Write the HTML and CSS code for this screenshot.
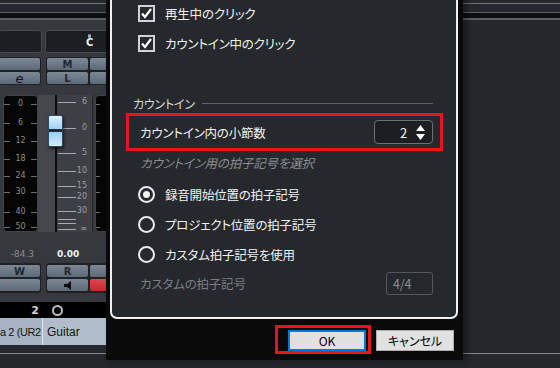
FILE: index.html
```html
<!DOCTYPE html>
<html lang="ja">
<head>
<meta charset="UTF-8">
<meta name="viewport" content="width=device-width, initial-scale=1.0">
<title>メトロノーム設定</title>
<link rel="stylesheet" href="styles.css">
</head>
<body>

<div class="mixer">
    <div class="topbar"></div>
    <div class="topbar-dark"></div>
    <div class="strips">
        <div class="row displays">
            <div class="display display-left"></div>
            <div class="display display-pan"><span class="pan-dot"></span><span class="pan-c">C</span></div>
        </div>

        <div class="row buttons">
            <div class="btn-group narrow">
                <div class="btn"></div>
                <div class="btn btn-e">e</div>
            </div>
            <div class="btn-group wide">
                <div class="btn-col">
                    <div class="btn">M</div>
                    <div class="btn">L</div>
                </div>
                <div class="btn-col side">
                    <div class="btn"></div>
                    <div class="btn"></div>
                </div>
            </div>
        </div>

        <div class="row faders">
            <div class="meter meter-left">
                <div class="tick" style="height:19px"><i></i><span>0</span><i></i></div>
                <div class="tick" style="height:18px"><i></i><span>6</span><i></i></div>
                <div class="tick" style="height:18px"><i></i><span>12</span><i></i></div>
                <div class="tick" style="height:17px"><i></i><span>18</span><i></i></div>
                <div class="tick" style="height:16px"><i></i><span>24</span><i></i></div>
                <div class="tick" style="height:20px"><i></i><span>30</span><i></i></div>
                <div class="tick" style="height:15px"><i></i><span>40</span><i></i></div>
                <div class="tick" style="height:10px"><i></i><span>50</span><i></i></div>
            </div>
            <div class="fader"></div>
            <div class="scale">
                <div class="tick" style="height:26px"><i></i><span>6</span></div>
                <div class="tick" style="height:25px"><i></i><span>0</span></div>
                <div class="tick" style="height:18px"><i></i><span>5</span></div>
                <div class="tick" style="height:15px"><i></i><span>10</span></div>
                <div class="tick" style="height:11px"><i></i><span>15</span></div>
                <div class="tick" style="height:14px"><i></i><span>20</span></div>
                <div class="tick" style="height:8px"><i></i><span>30</span></div>
                <div class="tick" style="height:4px"><i></i><span></span></div>
                <div class="tick" style="height:6px"><i></i><span></span></div>
                <div class="tick" style="height:8px"><i></i><span>∞</span></div>
            </div>
            <div class="meter meter-right">
                <div class="tick" style="height:19px"><i></i></div>
                <div class="tick" style="height:18px"><i></i></div>
                <div class="tick" style="height:18px"><i></i></div>
                <div class="tick" style="height:17px"><i></i></div>
                <div class="tick" style="height:16px"><i></i></div>
                <div class="tick" style="height:20px"><i></i></div>
                <div class="tick" style="height:15px"><i></i></div>
                <div class="tick" style="height:10px"><i></i></div>
            </div>
            <div class="fader-cap"></div>
        </div>

        <div class="row values">
            <span class="value-left">-84.3</span>
            <span class="value-right">0.00</span>
        </div>

        <div class="row buttons buttons-low">
            <div class="btn-group narrow">
                <div class="btn">W</div>
                <div class="btn"></div>
            </div>
            <div class="btn-group wide">
                <div class="btn-col">
                    <div class="btn">R</div>
                    <div class="btn">
                        <svg width="8" height="9" viewBox="0 0 8 9"><path d="M0 3h3l4-3v9l-4-3h-3z" fill="#0d0d0d"/></svg>
                    </div>
                </div>
                <div class="btn-col side">
                    <div class="btn"></div>
                    <div class="btn btn-red"></div>
                </div>
            </div>
        </div>

        <div class="row numbers">
            <span class="num">2</span>
            <span class="ring"></span>
        </div>

        <div class="row names">
            <div class="name name-left">a 2 (UR2</div>
            <div class="name name-right">Guitar</div>
        </div>
    </div>
    <div class="bottomline"></div>
</div>

<div class="dialog">
    <div class="panel">
        <label class="check-row">
            <span class="checkbox"><svg width="13" height="13" viewBox="0 0 13 13"><path d="M2 6.5l3 3.5 6-8" fill="none" stroke="#fff" stroke-width="2.2"/></svg></span>
            再生中のクリック
        </label>
        <label class="check-row">
            <span class="checkbox"><svg width="13" height="13" viewBox="0 0 13 13"><path d="M2 6.5l3 3.5 6-8" fill="none" stroke="#fff" stroke-width="2.2"/></svg></span>
            カウントイン中のクリック
        </label>

        <div class="section-title"><span>カウントイン</span><div class="section-line"></div></div>

        <div class="bars-row">
            <span>カウントイン内の小節数</span>
            <div class="spin">
                <span>2</span>
                <svg width="9" height="15" viewBox="0 0 9 15"><path d="M4.5 0L9 6H0z M0 9h9L4.5 15z" fill="#fff"/></svg>
            </div>
        </div>

        <div class="hint">カウントイン用の拍子記号を選択</div>

        <label class="radio-row"><span class="radio on"></span>録音開始位置の拍子記号</label>
        <label class="radio-row"><span class="radio"></span>プロジェクト位置の拍子記号</label>
        <label class="radio-row"><span class="radio"></span>カスタム拍子記号を使用</label>

        <div class="custom-row">
            <span>カスタムの拍子記号</span>
            <div class="sig-box">4/4</div>
        </div>
    </div>
    <div class="dialog-buttons">
        <button class="dlg-btn ok">OK</button>
        <button class="dlg-btn">キャンセル</button>
    </div>
</div>

</body>
</html>
```

FILE: styles.css
```css
body {
    margin: 0;
    width: 560px;
    height: 368px;
    overflow: hidden;
    position: relative;
    background-color: #24272b;
    font-family: "Noto Sans CJK JP", "Noto Sans", sans-serif;
}

/* ミキサー（背景） */
.mixer {
    height: 368px;
    display: flex;
    flex-direction: column;
}
.topbar {
    height: 12px;
    border-bottom: 1px solid #5c5f63;
    background: linear-gradient(#25282c 3px, #6e7175 3px, #6e7175 4px, #25282c 4px);
}
.topbar-dark {
    height: 5px;
    background-color: #0c0d0e;
    border-bottom: 2px solid #5c5f63;
}
.strips {
    width: 106px;
    padding-top: 10px;
    background-color: #35383c;
    overflow: hidden;
    font-family: "DejaVu Sans", sans-serif;
}
.row {
    display: flex;
}
.row > * {
    flex: none;
}
.displays {
    height: 23px;
}
.display {
    background-color: #1c1e21;
    border: 1px solid #45484c;
    border-radius: 3px;
    box-sizing: border-box;
    height: 23px;
}
.display-left {
    width: 44px;
    margin-left: -2px;
    margin-right: 3px;
}
.display-pan {
    width: 70px;
    display: flex;
    flex-direction: column;
    align-items: flex-start;
    padding-left: 40px;
}
.pan-dot {
    width: 3px;
    height: 4px;
    border-radius: 2px;
    background-color: #8fb6d8;
    margin: 3px 0 0 2px;
}
.pan-c {
    font-size: 10px;
    line-height: 10px;
    font-weight: bold;
    color: #e8eef4;
}

.buttons {
    margin-top: 4px;
    height: 28px;
}
.btn-group {
    display: flex;
    gap: 2px;
    padding: 1px;
    background-color: #1f2124;
    border-radius: 3px;
    box-sizing: border-box;
}
.btn-group.narrow {
    width: 43px;
    margin-left: -2px;
    flex-direction: column;
}
.btn-group.wide {
    margin-left: 5px;
    width: 90px;
}
.btn-col {
    flex: none;
    width: 41px;
    display: flex;
    flex-direction: column;
    gap: 2px;
}
.btn {
    height: 12px;
    background: linear-gradient(#7d8897, #5e6978);
    border-radius: 2px;
    display: flex;
    align-items: center;
    justify-content: center;
    font-size: 10px;
    font-weight: bold;
    color: #24282e;
}
.btn-e {
    font-style: italic;
    font-weight: normal;
    font-size: 13px;
    color: #111;
}
.btn-red {
    background: linear-gradient(#e2464c, #c02a31);
}

.faders {
    margin-top: 10px;
    height: 137px;
    position: relative;
}
.meter {
    background-color: #050505;
    border: 1px solid #3f4246;
    border-radius: 4px;
    box-sizing: border-box;
    padding-top: 3px;
    overflow: hidden;
}
.meter-left {
    width: 35px;
    margin-left: 3px;
}
.meter .tick {
    display: flex;
    justify-content: space-between;
    align-items: flex-start;
}
.meter .tick i {
    width: 6px;
    height: 1px;
    margin-top: 5px;
    background-color: #6a6d71;
}
.meter .tick span {
    font-size: 8px;
    line-height: 10px;
    color: #8a8d91;
}
.meter-right {
    width: 20px;
    margin-left: 2px;
}
.meter-right .tick i {
    width: 4px;
}
.fader {
    width: 17px;
    background-color: #44474b;
    border-right: 2px solid #0b0b0b;
}
.scale {
    width: 36px;
    background-color: #3c3f43;
    border-right: 1px solid #26282b;
    box-sizing: border-box;
    padding-top: 2px;
}
.scale .tick {
    display: flex;
    align-items: flex-start;
}
.scale .tick i {
    width: 18px;
    height: 1px;
    margin: 5px 0 0 1px;
    background-color: #a7aaae;
}
.scale .tick span {
    width: 11px;
    text-align: right;
    font-size: 8px;
    line-height: 10px;
    color: #9c9fa3;
}
.fader-cap {
    position: absolute;
    left: 48px;
    top: 20px;
    width: 15px;
    height: 32px;
    box-sizing: border-box;
    border: 1px solid #2b4a63;
    border-radius: 2px;
    background: linear-gradient(#e2f2fc, #9cd0f2 45%, #1e2a36 45%, #1e2a36 55%, #9ad0f3 55%, #d2ecfb);
    box-shadow: 1px 2px 3px rgba(0,0,0,0.6);
}

.values {
    margin-top: 13px;
    height: 17px;
    align-items: center;
    font-size: 9px;
}
.value-left {
    width: 34px;
    text-align: right;
    color: #8a8d91;
}
.value-right {
    margin-left: 23px;
    font-weight: bold;
    color: #f0f0f0;
}
.buttons-low {
    margin-top: 1px;
    height: 30px;
}
.buttons-low .btn-group {
    padding: 2px 1px;
}

.numbers {
    margin-top: 9px;
    height: 16px;
    background-color: #000;
    align-items: center;
}
.num {
    width: 39px;
    text-align: right;
    font-size: 11px;
    font-weight: bold;
    color: #d6d6d6;
}
.ring {
    width: 7px;
    height: 7px;
    margin-left: 13px;
    border: 2px solid #bdbdbd;
    border-radius: 50%;
}
.names {
    height: 27px;
    background-color: #a6b4c3;
    font-family: "Liberation Sans", Arial, sans-serif;
    font-size: 12px;
    color: #141414;
}
.name {
    display: flex;
    align-items: center;
    white-space: nowrap;
}
.name-left {
    width: 43px;
    border-right: 1px solid #dfe5ec;
    box-sizing: border-box;
    font-size: 11px;
    letter-spacing: -0.4px;
}
.name-right {
    width: 63px;
    padding-left: 4px;
    box-sizing: border-box;
    background-color: #b0bdca;
}
.bottomline {
    margin-top: 8px;
    height: 1px;
    background-color: #84878a;
}

/* ダイアログ */
.dialog {
    position: absolute;
    left: 106px;
    top: -24px;
    width: 357px;
    box-sizing: border-box;
    padding: 0 5px 0 4px;
    background-color: #0a0a0a;
    box-shadow: 4px 0 6px rgba(0,0,0,0.35);
    color: #f2f2f2;
    font-size: 12.5px;
    letter-spacing: -0.2px;
    font-feature-settings: "palt";
}
.panel {
    background-color: #25282c;
    border: 2px solid #f0f0f0;
    border-radius: 0 0 7px 7px;
    padding: 20px 0 20px 0;
}
.check-row,
.radio-row {
    height: 30px;
    display: flex;
    align-items: center;
    padding-left: 26px;
    gap: 10px;
}
.checkbox {
    width: 17px;
    height: 17px;
    box-sizing: border-box;
    border: 2px solid #d2d2d2;
    display: flex;
    align-items: center;
    justify-content: center;
}
.section-title {
    margin: 35px 23px 0 21px;
    height: 20px;
    display: flex;
    align-items: center;
    gap: 7px;
    color: #dadada;
    font-size: 12px;
}
.section-line {
    flex: 1;
    height: 1px;
    background-color: #5e6266;
}
.bars-row {
    height: 38px;
    box-sizing: border-box;
    margin: 0 13px 0 14px;
    border: 3px solid #e8141c;
    display: flex;
    align-items: center;
    justify-content: space-between;
    padding: 0 7px 0 11px;
}
.spin {
    width: 59px;
    height: 24px;
    box-sizing: border-box;
    border: 1px solid #6c6f73;
    border-radius: 4px;
    background-color: #1c1e21;
    display: flex;
    align-items: center;
    justify-content: flex-end;
    gap: 9px;
    padding-right: 7px;
}
.spin span {
    font-size: 13px;
}
.hint {
    height: 24px;
    line-height: 24px;
    padding-left: 28px;
    font-style: italic;
    color: #8a8d91;
}
.hint + .radio-row {
    margin-top: 4px;
}
.radio {
    width: 17px;
    height: 17px;
    box-sizing: border-box;
    border: 2px solid #ececec;
    border-radius: 50%;
    display: flex;
    align-items: center;
    justify-content: center;
}
.radio.on::after {
    content: "";
    width: 7px;
    height: 7px;
    border-radius: 50%;
    background-color: #f2f2f2;
}
.custom-row {
    height: 28px;
    display: flex;
    align-items: center;
    justify-content: space-between;
    padding: 0 23px 0 28px;
    color: #7b7e82;
}
.sig-box {
    width: 47px;
    height: 23px;
    box-sizing: border-box;
    border: 1px solid #54575b;
    border-radius: 3px;
    padding-left: 6px;
    line-height: 21px;
    color: #8c8f93;
}
.dialog-buttons {
    height: 41px;
    box-sizing: border-box;
    display: flex;
    justify-content: flex-end;
    gap: 10px;
    padding: 11px 4px 0 0;
}
.dlg-btn {
    width: 78px;
    height: 21px;
    box-sizing: border-box;
    background-color: #e1e1e1;
    border: 1px solid #adadad;
    font-family: "Noto Sans CJK JP", "Noto Sans", sans-serif;
    font-feature-settings: "palt";
    font-size: 12px;
    color: #000;
    padding: 0;
    line-height: 17px;
}
.ok {
    position: relative;
    border: 2px solid #0078d7;
}
/* 注釈の赤枠 */
.ok::after {
    content: "";
    position: absolute;
    left: -15px;
    top: -7px;
    right: -7px;
    bottom: -5px;
    border: 3px solid #e8141c;
}
```
